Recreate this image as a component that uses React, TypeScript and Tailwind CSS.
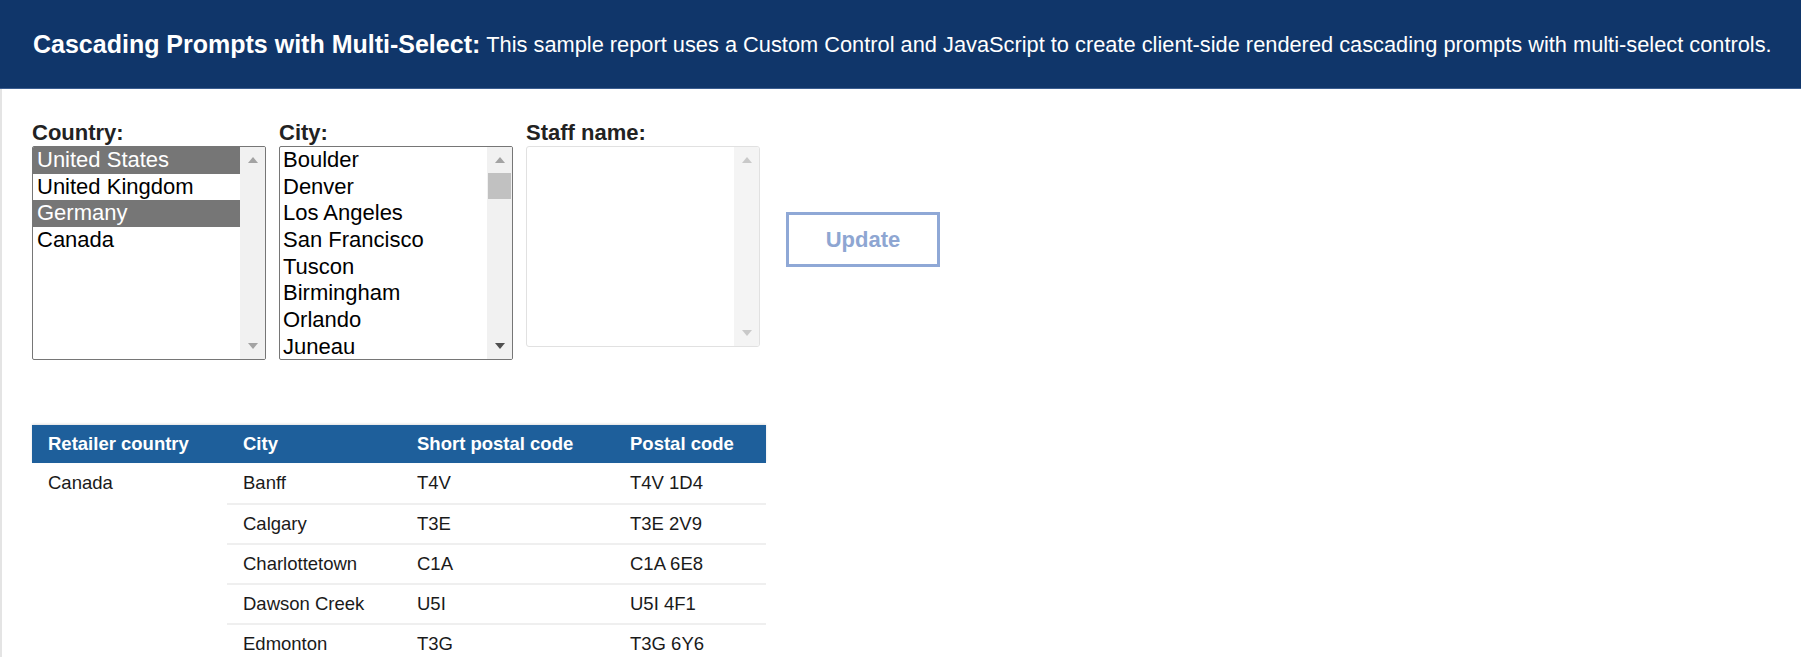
import React from 'react';

// ===========================================
// Cascading Prompts report page
// ===========================================

const FONT = { fontFamily: '"Liberation Sans", Arial, Helvetica, sans-serif' };

const countries = [
  { name: 'United States', selected: true },
  { name: 'United Kingdom', selected: false },
  { name: 'Germany', selected: true },
  { name: 'Canada', selected: false },
];

const cities = [
  'Boulder',
  'Denver',
  'Los Angeles',
  'San Francisco',
  'Tuscon',
  'Birmingham',
  'Orlando',
  'Juneau',
];

const rows = [
  { city: 'Banff', short: 'T4V', postal: 'T4V 1D4' },
  { city: 'Calgary', short: 'T3E', postal: 'T3E 2V9' },
  { city: 'Charlottetown', short: 'C1A', postal: 'C1A 6E8' },
  { city: 'Dawson Creek', short: 'U5I', postal: 'U5I 4F1' },
  { city: 'Edmonton', short: 'T3G', postal: 'T3G 6Y6' },
];

// ===========================================
// Scrollbar arrows
// ===========================================

const ArrowUp: React.FC<{ color: string }> = ({ color }) => (
  <svg width="10" height="6" viewBox="0 0 10 6">
    <path d="M0 6 L5 0 L10 6 Z" fill={color} />
  </svg>
);

const ArrowDown: React.FC<{ color: string }> = ({ color }) => (
  <svg width="10" height="6" viewBox="0 0 10 6">
    <path d="M0 0 L10 0 L5 6 Z" fill={color} />
  </svg>
);

interface ScrollbarProps {
  upColor: string;
  downColor: string;
  thumb?: boolean;
  track: string;
}

const Scrollbar: React.FC<ScrollbarProps> = ({ upColor, downColor, thumb, track }) => (
  <div className={`flex w-[25px] flex-col items-center ${track}`}>
    <div className="flex h-[26px] w-full items-center justify-center">
      <ArrowUp color={upColor} />
    </div>
    <div className="flex w-full flex-1 flex-col px-[1px]">
      {thumb && <div className="h-[26px] w-full bg-[#c1c1c1]" />}
    </div>
    <div className="flex h-[26px] w-full items-center justify-center">
      <ArrowDown color={downColor} />
    </div>
  </div>
);

// ===========================================
// Prompt label
// ===========================================

const Label: React.FC<{ children: React.ReactNode }> = ({ children }) => (
  <div className="mb-[1px] h-[24px] text-[22px] font-bold leading-[24px] text-[#222222]">
    {children}
  </div>
);

export default function App() {
  return (
    <div className="min-h-screen bg-white" style={FONT}>
      {/* Header */}
      <div className="flex h-[89px] items-center border-b border-[#3b5d8f] bg-[#10366a] pl-[33px] pt-[2px] text-white">
        <span className="text-[25px] font-bold">Cascading Prompts with Multi-Select:</span>
        <span className="ml-[6px] text-[21.8px]">
          This sample report uses a Custom Control and JavaScript to create client-side rendered cascading prompts with multi-select controls.
        </span>
      </div>

      <div className="border-l-2 border-[#e4e4e4] pl-[30px] pt-[32px]">
        {/* Prompts */}
        <div className="flex items-center">
          <div className="flex gap-[13px]">
            {/* Country */}
            <div className="flex flex-col">
              <Label>Country:</Label>
              <div className="flex h-[214px] w-[234px] overflow-hidden rounded-[2px] border border-[#767676]">
                <div className="flex-1 text-[22px] leading-[26.7px] text-black">
                  {countries.map((c) => (
                    <div
                      key={c.name}
                      className={`h-[26.7px] pl-[4px] ${c.selected ? 'bg-[#767676] text-white' : ''}`}
                    >
                      {c.name}
                    </div>
                  ))}
                </div>
                <Scrollbar upColor="#a3a3a3" downColor="#a3a3a3" track="bg-[#f1f1f1]" />
              </div>
            </div>

            {/* City */}
            <div className="flex flex-col">
              <Label>City:</Label>
              <div className="flex h-[214px] w-[234px] overflow-hidden rounded-[2px] border border-[#767676]">
                <div className="flex-1 text-[22px] leading-[26.7px] text-black">
                  {cities.map((c) => (
                    <div key={c} className="h-[26.7px] pl-[3px]">
                      {c}
                    </div>
                  ))}
                </div>
                <Scrollbar upColor="#a3a3a3" downColor="#505050" thumb track="bg-[#f1f1f1]" />
              </div>
            </div>

            {/* Staff name (disabled) */}
            <div className="flex flex-col">
              <Label>Staff name:</Label>
              <div className="flex h-[201px] w-[234px] overflow-hidden rounded-[3px] border border-[#e1e1e1]">
                <div className="flex-1" />
                <Scrollbar upColor="#c9c9c9" downColor="#c9c9c9" track="bg-[#f4f4f4]" />
              </div>
            </div>
          </div>

          <button className="ml-[26px] mt-[-2px] h-[55px] w-[154px] border-[3px] border-[#8fa8d6] bg-white text-[22px] font-bold text-[#8ea6d2]">
            Update
          </button>
        </div>

        {/* Results table */}
        <div className="mt-[65px] w-[734px]">
          <div className="flex h-[38px] items-center bg-[#1e5f9b] text-[18.5px] font-bold text-white shadow-[0_-1px_2px_rgba(0,0,0,0.12)]">
            <div className="w-[195px] pl-[16px]">Retailer country</div>
            <div className="w-[174px] pl-[16px]">City</div>
            <div className="w-[213px] pl-[16px]">Short postal code</div>
            <div className="flex-1 pl-[16px]">Postal code</div>
          </div>
          <div className="flex text-[18.5px] text-[#1a1a1a]">
            <div className="flex h-[40px] w-[195px] items-center pl-[16px]">Canada</div>
            <div className="flex-1">
              {rows.map((r, i) => (
                <div
                  key={r.city}
                  className={`flex h-[40px] items-center ${i > 0 ? 'border-t-2 border-[#efefef]' : ''}`}
                >
                  <div className="w-[174px] pl-[16px]">{r.city}</div>
                  <div className="w-[213px] pl-[16px]">{r.short}</div>
                  <div className="flex-1 pl-[16px]">{r.postal}</div>
                </div>
              ))}
            </div>
          </div>
        </div>
      </div>
    </div>
  );
}
